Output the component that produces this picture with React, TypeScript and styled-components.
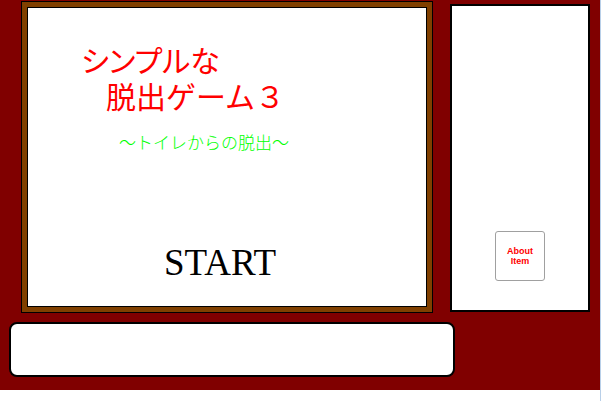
import React from 'react';
import styled, { createGlobalStyle } from 'styled-components';

const GlobalStyle = createGlobalStyle`
  html, body {
    margin: 0;
    padding: 0;
    background: #ffffff;
  }
  body {
    font-family: "Noto Sans CJK JP", "DejaVu Sans", sans-serif;
  }
`;

export default function App() {
  return (
    <>
      <GlobalStyle />
      <Page>
        <Game>
          <TopRow>
            <Frame>
              <Screen>
                <Title>
                  <TitleLine proportional>シンプルな</TitleLine>
                  <TitleLine indent={25}>脱出ゲーム３</TitleLine>
                </Title>
                <SubTitle>〜トイレからの脱出〜</SubTitle>
                <StartButton>START</StartButton>
              </Screen>
            </Frame>
            <ItemPanel>
              <AboutItemButton>
                About
                <br />
                Item
              </AboutItemButton>
            </ItemPanel>
          </TopRow>
          <MessageBox />
        </Game>
        <EdgeLine />
      </Page>
    </>
  );
}

const Page = styled.div`
  display: flex;
  align-items: stretch;
  height: 401px;
`;

const Game = styled.div`
  width: 600px;
  height: 390px;
  background: #800000;
  display: flex;
  flex-direction: column;
  box-sizing: border-box;
`;

const EdgeLine = styled.div`
  width: 1px;
  background: #b8cfe8;
`;

const TopRow = styled.div`
  display: flex;
  align-items: flex-start;
`;

const Frame = styled.div`
  margin: 1px 0 0 21px;
  width: 412px;
  height: 312px;
  box-sizing: border-box;
  border: 1px solid #000000;
  background: #804000;
  padding: 5px;
  display: flex;
`;

const Screen = styled.div`
  flex: 1;
  background: #ffffff;
  border: 1px solid #000000;
  display: flex;
  flex-direction: column;
`;

const Title = styled.div`
  margin: 33px 0 0 53px;
  color: #ff0000;
  font-size: 30px;
  line-height: 36px;
`;

const TitleLine = styled.div<{ indent?: number; proportional?: boolean }>`
  padding-left: ${(p) => p.indent ?? 0}px;
  white-space: nowrap;
  font-feature-settings: ${(p) => (p.proportional ? '"palt"' : 'normal')};
`;

const SubTitle = styled.div`
  margin: 18px 0 0 91px;
  color: #00ff00;
  font-size: 17px;
  line-height: 22px;
  font-weight: 300;
  white-space: nowrap;
`;

const StartButton = styled.div`
  margin: 90px 0 0 136px;
  font-family: "Liberation Serif", "DejaVu Serif", serif;
  font-size: 37px;
  line-height: 40px;
  color: #000000;
`;

const ItemPanel = styled.div`
  margin: 4px 0 0 17px;
  width: 140px;
  height: 308px;
  box-sizing: border-box;
  border: 2px solid #000000;
  background: #ffffff;
  display: flex;
  justify-content: center;
  padding-top: 225px;
`;

const AboutItemButton = styled.div`
  width: 50px;
  height: 50px;
  box-sizing: border-box;
  border: 1px solid #a0a0a0;
  border-radius: 3px;
  background: #ffffff;
  color: #ff0000;
  font-family: "Liberation Sans", "DejaVu Sans", sans-serif;
  font-weight: bold;
  font-size: 9px;
  line-height: 10px;
  text-align: center;
  display: flex;
  align-items: center;
  justify-content: center;
`;

const MessageBox = styled.div`
  margin: 9px 0 0 9px;
  width: 446px;
  height: 55px;
  box-sizing: border-box;
  border: 2px solid #000000;
  border-radius: 8px;
  background: #ffffff;
`;
